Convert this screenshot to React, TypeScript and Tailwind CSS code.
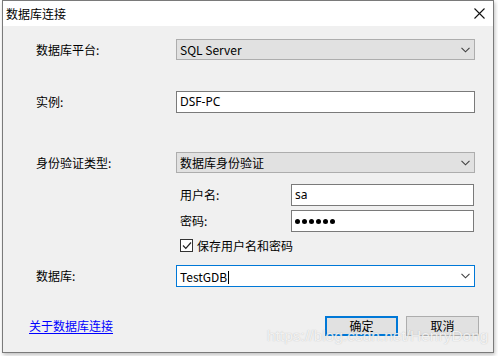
import React from 'react';

const cjk = { fontFamily: '"Microsoft YaHei", "Noto Sans CJK SC", sans-serif' };
const latin = { fontFamily: '"Segoe UI", "Noto Sans", "Noto Sans CJK SC", sans-serif' };

function Chevron() {
  return (
    <svg width="9" height="6" viewBox="0 0 9 6" className="shrink-0">
      <path d="M0.5 0.8 L4.5 4.8 L8.5 0.8" fill="none" stroke="#404040" strokeWidth="1.1" />
    </svg>
  );
}

function Combo({ value, editable = false }: { value: string; editable?: boolean }) {
  return (
    <div
      className={
        editable
          ? 'flex h-[22px] w-[299px] items-center border border-[#0078d7] bg-white pl-[3px] pr-[4px]'
          : 'flex h-[21px] w-[299px] items-center border border-[#adadad] bg-[#e1e1e1] pl-[3px] pr-[4px]'
      }
    >
      <span className="flex-1 text-[12px] leading-none text-black" style={cjk}>
        {value}
        {editable && <span className="ml-px inline-block h-[13px] w-px translate-y-[2px] bg-black" />}
      </span>
      <Chevron />
    </div>
  );
}

function TextBox({ value, width = 'w-[299px]', password = false }: { value: string; width?: string; password?: boolean }) {
  return (
    <div className={`flex h-[22px] ${width} items-center border border-[#7a7a7a] bg-white pl-[3px]`}>
      {password ? (
        <span className="flex gap-[2px]">
          {[0, 1, 2, 3, 4, 5].map((i) => (
            <span key={i} className="block h-[5px] w-[5px] rounded-full bg-black" />
          ))}
        </span>
      ) : (
        <span className="text-[12px] leading-none text-black" style={latin}>
          {value}
        </span>
      )}
    </div>
  );
}

function Label({ children }: { children: React.ReactNode }) {
  return (
    <span className="w-[140px] shrink-0 text-[12px] leading-none text-black" style={cjk}>
      {children}
    </span>
  );
}

export default function App() {
  return (
    <div className="relative h-[356px] w-[498px] overflow-hidden bg-white">
      <div className="ml-[2px] flex h-[353px] w-[492px] flex-col border border-[#7a7a7a] bg-[#f0f0f0] shadow-[1px_2px_4px_rgba(0,0,0,0.25)]">
        {/* title bar */}
        <div className="flex h-[25px] shrink-0 items-center justify-between bg-white pl-[3px] pr-[8px]">
          <span className="text-[12px] leading-none text-black" style={cjk}>
            数据库连接
          </span>
          <svg width="11" height="11" viewBox="0 0 11 11">
            <path d="M0.5 0.5 L10.5 10.5 M10.5 0.5 L0.5 10.5" stroke="#111" strokeWidth="1.1" />
          </svg>
        </div>

        <div className="flex flex-col pl-[33px]">
          <div className="mt-[13px] flex items-center">
            <Label>数据库平台:</Label>
            <Combo value="SQL Server" />
          </div>

          <div className="mt-[31px] flex items-center">
            <Label>实例:</Label>
            <TextBox value="DSF-PC" />
          </div>

          <div className="mt-[39px] flex items-center">
            <Label>身份验证类型:</Label>
            <Combo value="数据库身份验证" />
          </div>

          <div className="ml-[144px] mt-[11px] flex w-[294px] flex-col">
            <div className="flex items-center justify-between">
              <span className="text-[12px] leading-none text-black" style={cjk}>
                用户名:
              </span>
              <TextBox value="sa" width="w-[183px]" />
            </div>
            <div className="mt-[4px] flex items-center justify-between">
              <span className="text-[12px] leading-none text-black" style={cjk}>
                密码:
              </span>
              <TextBox value="" width="w-[183px]" password />
            </div>
            <div className="mt-[7px] flex items-center gap-[4px]">
              <span className="flex h-[13px] w-[13px] items-center justify-center border border-[#333] bg-white">
                <svg width="10" height="9" viewBox="0 0 10 9">
                  <path d="M1 4.5 L3.8 7.3 L9 1.5" fill="none" stroke="#222" strokeWidth="1.2" />
                </svg>
              </span>
              <span className="text-[12px] leading-none text-black" style={cjk}>
                保存用户名和密码
              </span>
            </div>
          </div>

          <div className="mt-[13px] flex items-center">
            <Label>数据库:</Label>
            <Combo value="TestGDB" editable />
          </div>
        </div>

        <div className="mt-[29px] flex items-center pl-[26px] pr-[14px]">
          <span className="flex-1 text-[12px] leading-none text-[#0000ff] underline underline-offset-2" style={cjk}>
            关于数据库连接
          </span>
          <button className="flex h-[20px] w-[73px] items-center justify-center border-2 border-[#0078d7] bg-[#e1e1e1] text-[12px] leading-none text-black" style={cjk}>
            确定
          </button>
          <button className="ml-[8px] flex h-[20px] w-[73px] items-center justify-center border border-[#adadad] bg-[#e1e1e1] text-[12px] leading-none text-black" style={cjk}>
            取消
          </button>
        </div>
      </div>

      {/* watermark */}
      <span
        className="pointer-events-none absolute left-[267px] top-[328px] whitespace-nowrap text-[15.5px] leading-none text-white/80 [text-shadow:0_0_1px_rgba(120,120,120,0.5)]"
        style={{ fontFamily: '"Liberation Sans", Arial, sans-serif' }}
      >
        https://blog.csdn.net/HenryDong
      </span>
    </div>
  );
}
